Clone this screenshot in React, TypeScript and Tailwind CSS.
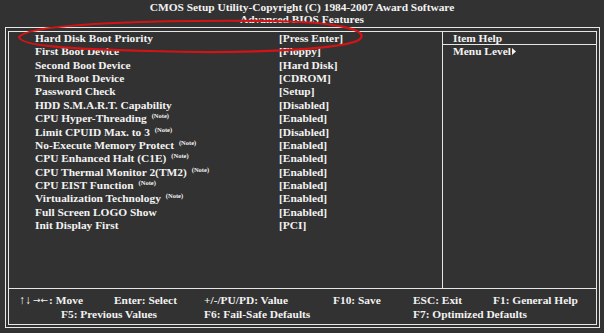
import React from "react";

const rows: { label: string; value: string; note?: boolean }[] = [
  { label: "Hard Disk Boot Priority", value: "[Press Enter]" },
  { label: "First Boot Device", value: "[Floppy]" },
  { label: "Second Boot Device", value: "[Hard Disk]" },
  { label: "Third Boot Device", value: "[CDROM]" },
  { label: "Password Check", value: "[Setup]" },
  { label: "HDD S.M.A.R.T. Capability", value: "[Disabled]" },
  { label: "CPU Hyper-Threading", value: "[Enabled]", note: true },
  { label: "Limit CPUID Max. to 3", value: "[Disabled]", note: true },
  { label: "No-Execute Memory Protect", value: "[Enabled]", note: true },
  { label: "CPU Enhanced Halt (C1E)", value: "[Enabled]", note: true },
  { label: "CPU Thermal Monitor 2(TM2)", value: "[Enabled]", note: true },
  { label: "CPU EIST Function", value: "[Enabled]", note: true },
  { label: "Virtualization Technology", value: "[Enabled]", note: true },
  { label: "Full Screen LOGO Show", value: "[Enabled]" },
  { label: "Init Display First", value: "[PCI]" },
];

export default function App() {
  return (
    <div
      className="relative w-[604px] h-[333px] overflow-hidden bg-[#323232] text-[#f2f2f2] font-bold text-[11.4px]"
      style={{ fontFamily: '"Liberation Serif", "Times New Roman", serif' }}
    >
      <div className="h-[27px] pt-[1px] flex flex-col items-center leading-[12px]">
        <div>CMOS Setup Utility-Copyright (C) 1984-2007 Award Software</div>
        <div>Advanced BIOS Features</div>
      </div>
      <div className="ml-[5px] w-[595px] h-[301px] border border-[#e6e6e6] pl-[2px] pr-[2px] pt-[3px] pb-[2px]">
        <div className="h-full border border-[#e6e6e6] flex flex-col">
          <div className="h-[257px] flex border-b border-[#e6e6e6]">
            <div className="w-[434px] border-r border-[#e6e6e6] pl-[26px] leading-[13.36px]">
              {rows.map((r) => (
                <div key={r.label} className="flex h-[13.36px] whitespace-nowrap">
                  <div className="w-[244px] flex items-start">
                    <span>{r.label}</span>
                    {r.note && (
                      <span className="ml-[5px] text-[6.5px] leading-[8px]">(Note)</span>
                    )}
                  </div>
                  <div>{r.value}</div>
                </div>
              ))}
            </div>
            <div className="flex-1 flex flex-col leading-[13px]">
              <div className="h-[13px] border-b border-[#e6e6e6] pl-[10px] leading-[12px]">Item Help</div>
              <div className="pl-[10px] flex items-center">
                <span>Menu Level</span>
                <svg width="4" height="7" viewBox="0 0 4 7" className="ml-[1px]">
                  <path d="M0 0 L4 3.5 L0 7 Z" fill="#f2f2f2" />
                </svg>
              </div>
            </div>
          </div>
          <div className="flex-1 pt-[5px] leading-[13.5px] whitespace-nowrap">
            <div className="flex pl-[10px]">
              <span className="w-[95px] flex items-center">
                <span className="text-[12px]">↑↓</span>
                <span
                  className="text-[9px] font-normal ml-[2px] mr-[1px]"
                  style={{ fontFamily: '"DejaVu Sans", sans-serif' }}
                >
                  →←
                </span>
                <span>: Move</span>
              </span>
              <span className="w-[90px]">Enter: Select</span>
              <span className="w-[129px]">+/-/PU/PD: Value</span>
              <span className="w-[80px]">F10: Save</span>
              <span className="w-[80px]">ESC: Exit</span>
              <span>F1: General Help</span>
            </div>
            <div className="flex pl-[52px]">
              <span className="w-[143px]">F5: Previous Values</span>
              <span className="w-[209px]">F6: Fail-Safe Defaults</span>
              <span>F7: Optimized Defaults</span>
            </div>
          </div>
        </div>
      </div>
      <svg
        className="absolute left-0 top-0 pointer-events-none"
        width="604"
        height="333"
        viewBox="0 0 604 333"
      >
        <path
          d="M 19 37 C 30 22, 180 20, 270 21 C 340 22, 366 30, 361 38 C 352 50, 240 54, 150 51 C 70 49, 20 46, 19 37 Z"
          fill="none"
          stroke="#d41414"
          strokeWidth="2.2"
        />
      </svg>
    </div>
  );
}
